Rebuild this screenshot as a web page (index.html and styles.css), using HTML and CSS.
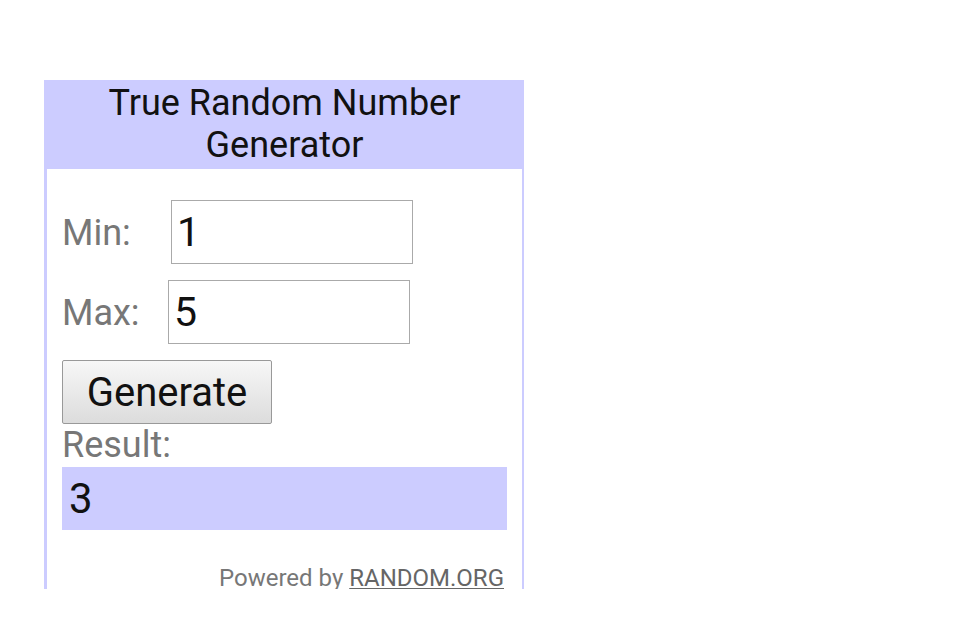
FILE: index.html
```html
<!DOCTYPE html>
<html lang="en">
<head>
    <meta charset="UTF-8">
    <title>True Random Number Generator</title>
    <link rel="stylesheet" href="styles.css">
</head>
<body>
    <!-- RANDOM.ORG widget frame -->
    <div class="widget">
        <div class="widget-header">True Random Number Generator</div>
        <div class="widget-body">
            <div class="field-row">
                <label class="field-label label-min">Min:</label>
                <input type="text" class="field-input" value="1">
            </div>
            <div class="field-row">
                <label class="field-label label-max">Max:</label>
                <input type="text" class="field-input" value="5">
            </div>
            <button class="generate-btn">Generate</button>
            <div class="result-label">Result:</div>
            <div class="result-box">3</div>
            <div class="powered">Powered by <a href="#">RANDOM.ORG</a></div>
        </div>
    </div>
</body>
</html>
```

FILE: styles.css
```css
* {
    box-sizing: border-box;
    margin: 0;
    padding: 0;
}

body {
    font-family: Roboto, 'Noto Sans', sans-serif;
    background-color: #fff;
}

/* Widget frame */
.widget {
    margin: 80px 0 0 44px;
    width: 480px;
    height: 509px;
    overflow: hidden;
    border-left: 3px solid #ccccff;
    border-right: 2px solid #ccccff;
}

.widget-header {
    background-color: #ccccff;
    color: #111;
    font-size: 36px;
    line-height: 42px;
    text-align: center;
    padding: 2px 30px 3px;
}

.widget-body {
    padding: 31px 15px 0 15px;
    display: flex;
    flex-direction: column;
    align-items: flex-start;
}

.field-row {
    display: flex;
    align-items: center;
    margin-bottom: 16px;
}

.field-label {
    color: #777;
    font-size: 36px;
    padding-top: 2px;
}

.label-min { width: 109px; }
.label-max { width: 106px; }

.field-input {
    width: 242px;
    height: 64px;
    border: 1px solid #aaa;
    padding: 0 5px;
    font-family: Roboto, sans-serif;
    font-size: 41px;
    color: #111;
    outline: none;
}

.generate-btn {
    width: 210px;
    height: 64px;
    font-family: Roboto, sans-serif;
    font-size: 40px;
    color: #111;
    border: 1px solid #999;
    border-radius: 2px;
    background: linear-gradient(#f7f7f7, #dcdcdc);
}

.result-label {
    color: #777;
    font-size: 36px;
    line-height: 43px;
}

.result-box {
    width: 445px;
    height: 63px;
    background-color: #ccccff;
    font-size: 42px;
    line-height: 63px;
    padding-left: 7px;
    color: #111;
}

.powered {
    align-self: flex-end;
    margin: 34px 3px 0 0;
    font-size: 24px;
    line-height: 28px;
    color: #777;
}

.powered a {
    color: #666;
}
```
